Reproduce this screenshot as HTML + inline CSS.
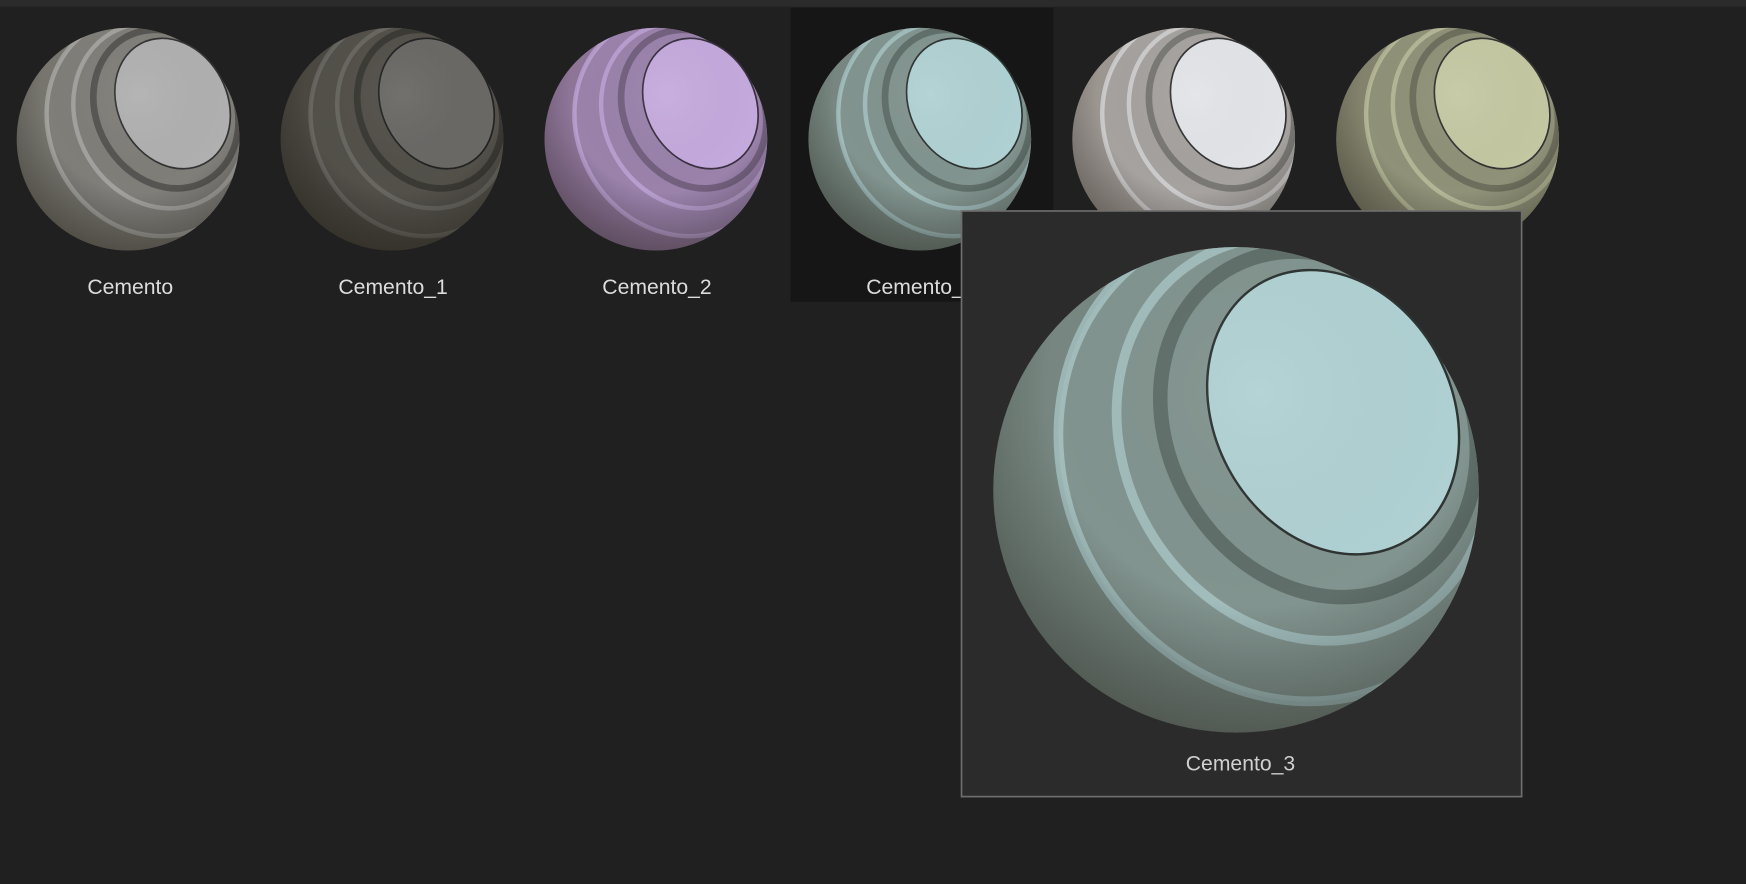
<!DOCTYPE html>
<html><head><meta charset="utf-8"><style>
html,body{margin:0;padding:0;background:#202020;width:1746px;height:884px;overflow:hidden}
svg{display:block}
text{font-family:"Liberation Sans",sans-serif;}
</style></head><body>
<svg width="1746" height="884" viewBox="0 0 1568 794" preserveAspectRatio="none" xmlns="http://www.w3.org/2000/svg">
<defs>
<radialGradient id="shade" cx="0.55" cy="0.3" r="0.8">
<stop offset="0" stop-color="#fff" stop-opacity="0.06"/>
<stop offset="0.55" stop-color="#000" stop-opacity="0"/>
<stop offset="1" stop-color="#1a1408" stop-opacity="0.5"/>
</radialGradient>
<clipPath id="cl"><circle cx="0" cy="0" r="100"/></clipPath>
<g id="rings">
<g clip-path="url(#cl)">
<ellipse cx="20" cy="-12" rx="90" ry="102" transform="rotate(-30 20 -12)" fill="none" stroke="var(--lt)" stroke-width="4" opacity="0.6"/>
<ellipse cx="28" cy="-21" rx="74" ry="86" transform="rotate(-30 28 -21)" fill="none" stroke="var(--lt)" stroke-width="4" opacity="0.6"/>
<ellipse cx="34" cy="-27" rx="62" ry="74" transform="rotate(-30 34 -27)" fill="none" stroke="var(--dk)" stroke-width="6" opacity="0.6"/>
</g>
</g>
</defs>
<rect x="0" y="0" width="1568" height="6" fill="#2b2b2b"/>
<rect x="710" y="7" width="236" height="264" fill="#161616"/>

<g font-size="19" fill="#dcdcdc" text-anchor="middle">
<text x="117" y="264">Cemento</text>
<text x="353" y="264">Cemento_1</text>
<text x="590" y="264">Cemento_2</text>
<text x="827" y="264">Cemento_3</text>
</g>

<g transform="translate(115,125)" style="--lt:#b9b9b6;--dk:#3a3a38">
<circle r="100" fill="#77756e"/><g clip-path="url(#cl)"><ellipse cx="20" cy="-12" rx="90" ry="102" transform="rotate(-30 20 -12)" fill="#807e79"/></g>
<use href="#rings"/><ellipse cx="40" cy="-32" rx="49" ry="61" transform="rotate(-28 40 -32)" fill="#b0b0b0" stroke="#333" stroke-width="1.5"/><circle r="100" fill="url(#shade)"/></g>
<g transform="translate(352,125)" style="--lt:#77746f;--dk:#2a2926">
<circle r="100" fill="#4b4842"/><g clip-path="url(#cl)"><ellipse cx="20" cy="-12" rx="90" ry="102" transform="rotate(-30 20 -12)" fill="#53504a"/></g>
<use href="#rings"/><ellipse cx="40" cy="-32" rx="49" ry="61" transform="rotate(-28 40 -32)" fill="#6a6865" stroke="#222" stroke-width="1.5"/><circle r="100" fill="url(#shade)"/></g>
<g transform="translate(589,125)" style="--lt:#cbb0e6;--dk:#5a4a62">
<circle r="100" fill="#8e7598"/><g clip-path="url(#cl)"><ellipse cx="20" cy="-12" rx="90" ry="102" transform="rotate(-30 20 -12)" fill="#9a82ab"/></g>
<use href="#rings"/><ellipse cx="40" cy="-32" rx="49" ry="61" transform="rotate(-28 40 -32)" fill="#c4aadd" stroke="#3a3040" stroke-width="1.5"/><circle r="100" fill="url(#shade)"/></g>
<g transform="translate(826,125)" style="--lt:#b6d7d8;--dk:#4a5652">
<circle r="100" fill="#778680"/><g clip-path="url(#cl)"><ellipse cx="20" cy="-12" rx="90" ry="102" transform="rotate(-30 20 -12)" fill="#82948f"/></g>
<use href="#rings"/><ellipse cx="40" cy="-32" rx="49" ry="61" transform="rotate(-28 40 -32)" fill="#b0d1d3" stroke="#2d3432" stroke-width="1.5"/><circle r="100" fill="url(#shade)"/></g>
<g transform="translate(1063,125)" style="--lt:#e6e6ea;--dk:#5e5b58">
<circle r="100" fill="#9c9691"/><g clip-path="url(#cl)"><ellipse cx="20" cy="-12" rx="90" ry="102" transform="rotate(-30 20 -12)" fill="#a6a29f"/></g>
<use href="#rings"/><ellipse cx="40" cy="-32" rx="49" ry="61" transform="rotate(-28 40 -32)" fill="#e2e4e8" stroke="#333" stroke-width="1.5"/><circle r="100" fill="url(#shade)"/></g>
<g transform="translate(1300,125)" style="--lt:#cbcfaa;--dk:#56574a">
<circle r="100" fill="#83836d"/><g clip-path="url(#cl)"><ellipse cx="20" cy="-12" rx="90" ry="102" transform="rotate(-30 20 -12)" fill="#8f9178"/></g>
<use href="#rings"/><ellipse cx="40" cy="-32" rx="49" ry="61" transform="rotate(-28 40 -32)" fill="#c4c8a2" stroke="#333" stroke-width="1.5"/><circle r="100" fill="url(#shade)"/></g>

<rect x="863.5" y="189.5" width="503" height="526" fill="#2b2b2b" stroke="#6e6e6e" stroke-width="1.5"/>
<g transform="translate(1110,440) scale(2.18)" style="--lt:#b6d7d8;--dk:#4a5652">
<circle r="100" fill="#778680"/><g clip-path="url(#cl)"><ellipse cx="20" cy="-12" rx="90" ry="102" transform="rotate(-30 20 -12)" fill="#82948f"/></g>
<use href="#rings"/><ellipse cx="40" cy="-32" rx="49" ry="61" transform="rotate(-28 40 -32)" fill="#b0d1d3" stroke="#2d3432" stroke-width="1"/><circle r="100" fill="url(#shade)"/></g>
<text x="1114" y="692" font-size="19" fill="#d0d0d0" text-anchor="middle">Cemento_3</text>
</svg>
</body></html>
